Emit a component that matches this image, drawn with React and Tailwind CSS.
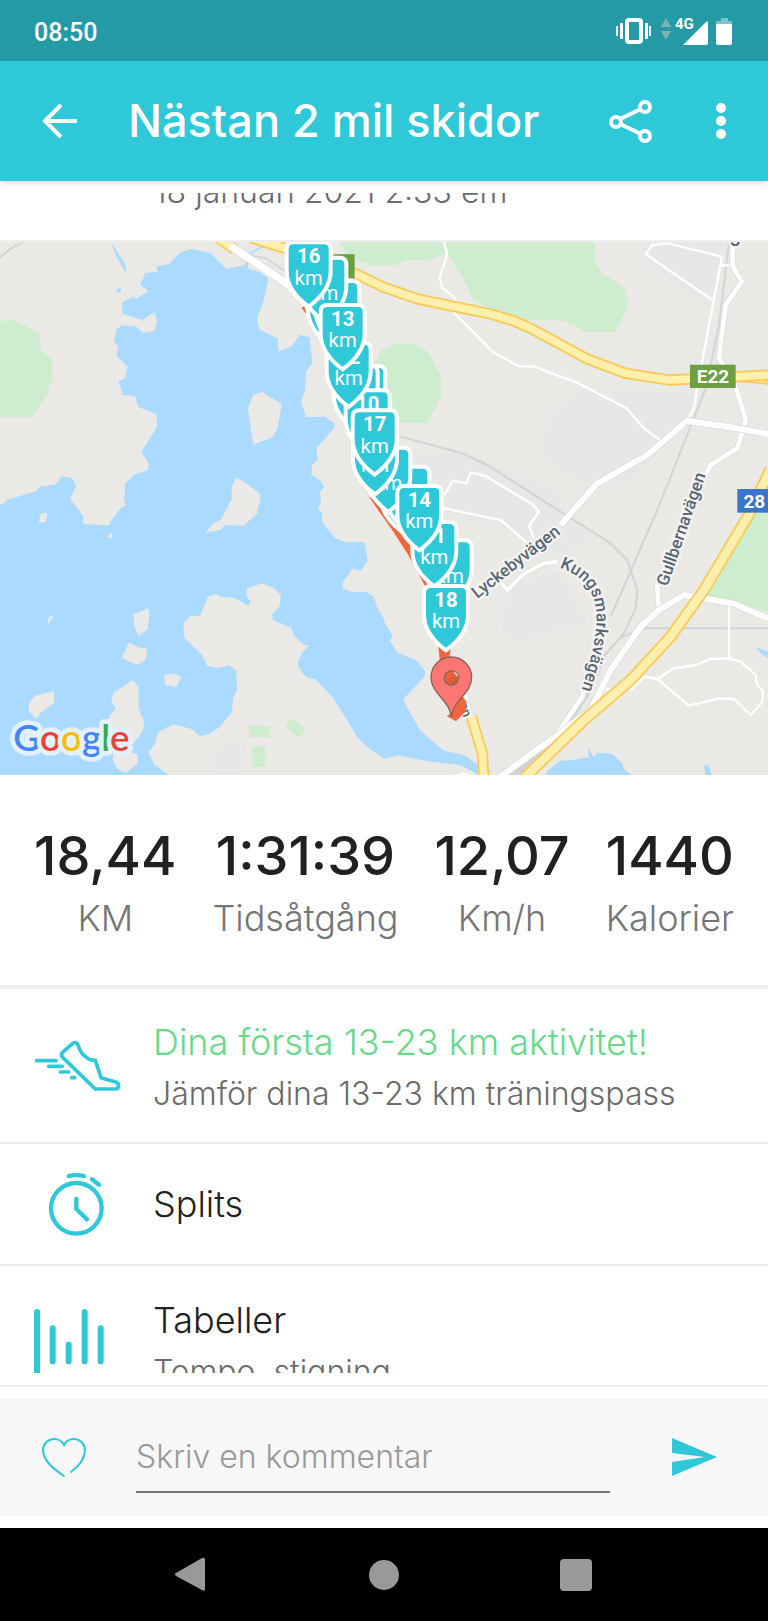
const STATS = [
  { value: "18,44", label: "KM" },
  { value: "1:31:39", label: "Tidsåtgång" },
  { value: "12,07", label: "Km/h" },
  { value: "1440", label: "Kalorier" },
];

// km flags along the track, back to front
const FLAGS = [
  { x: 990, y: 119 },
  { x: 1012, y: 119 },
  { x: 973, y: 49, km: "4" },
  { x: 926, y: 3, km: "16" },
  { x: 1090, y: 374 },
  { x: 1067, y: 374 },
  { x: 1103, y: 447, km: "10" },
  { x: 1046, y: 304, km: "12" },
  { x: 1028, y: 191, km: "13" },
  { x: 1208, y: 680 },
  { x: 1222, y: 676 },
  { x: 1165, y: 619, km: "3" },
  { x: 1125, y: 566, km: "9" },
  { x: 1124, y: 507, km: "17" },
  { x: 1349, y: 897, km: "2" },
  { x: 1303, y: 842, km: "11" },
  { x: 1258, y: 734, km: "14" },
  { x: 1338, y: 1034, km: "18" },
];

function Flag({ x, y, km }) {
  return (
    <g transform={`translate(${x} ${y})`} textAnchor="middle" fill="#fff" fontSize="61">
      <path
        d="M-66 18Q-66 -2 -46 -2H46Q66 -2 66 18V84Q66 142 0 191Q-66 142 -66 84Z"
        fill="#2ec8d8"
        stroke="#fff"
        strokeWidth="12"
      />
      {km && <text y="61" fontWeight="700">{km}</text>}
      {km && <text y="125">km</text>}
    </g>
  );
}

function Road({ d, width = 18, fill = "#fff", edge = "#d9d9da" }) {
  return (
    <g fill="none" strokeLinejoin="round">
      <path d={d} stroke={edge} strokeWidth={width + 4} />
      <path d={d} stroke={fill} strokeWidth={width} />
    </g>
  );
}

function Highway({ d, width = 34 }) {
  return (
    <g fill="none" strokeLinejoin="round">
      <path d={d} stroke="#f7cb5a" strokeWidth={width} />
      <path d={d} stroke="#ffefad" strokeWidth={width - 11} />
    </g>
  );
}

function TrackMap() {
  return (
    <svg
      viewBox="0 0 2304 1599"
      className="block w-full bg-[#ebe9e6] font-['Roboto',sans-serif] font-normal"
      role="img"
      aria-label="Karta över passet"
    >
      {/* north-west: bay and woods */}
      <g transform="translate(0 -21)">
        <path fill="#ceedce" d="M0 258 38 255 118 293 123 345 157 373V430L143 475 97 545H0Z" />
        <g fill="#aadaff">
          <path d="M378 814 372 798 376 745 407 716 442 707 447 688 424 650 471 577 470 537 415 516 405 483 368 480 355 438 373 431 383 396 350 362 355 337 342 319 349 286 365 271 410 275 428 293 463 289 471 262 464 231 428 255 367 236V202L405 182 404 193 445 169 420 149 436 114 474 110 468 95 508 86 537 55 575 41 632 55 680 102 735 90 742 74 745 103 778 110 805 128 793 190 770 255 780 285 833 310 835 350 876 333 898 300 928 306 937 384 918 410 915 465 903 500 918 546 975 545 1003 565 1004 577 950 640 953 675 936 690 934 720 963 738 972 757 960 770 965 814Z" />
          <path d="M0 808 22 794 110 768 122 754 165 749 187 724 217 730 229 752 211 790 225 814H0Z" />
          <path d="M332 22 375 85 380 117 348 62Z" />
          <path d="M345 170 362 155V174Z" />
        </g>
        <path d="M740 95 748 56 803 28" fill="none" stroke="#aadaff" strokeWidth="5" />
        <g fill="#ebe9e6">
          <path d="M760 480 786 471 845 507 833 580 818 606 760 629 744 522Z" />
          <path d="M708 729 733 740 780 777 779 814H680L695 795V755Z" />
        </g>
        <g fill="none" stroke="#d3d3d6" strokeWidth="5">
          <path d="M0 68 30 42 70 20" />
          <path d="M750 60 800 70 870 120" />
        </g>
        <Highway d="M650 5 705 44" />
        <Road d="M690 32 860 146 920 210" width={22} />
      </g>

      {/* south-west: open water with islands */}
      <g transform="translate(0 774)">
        <path fill="#aadaff" d="M0 14H1152V828H0Z" />
        <g fill="#ebe9e6">
          <path d="M215 0 250 50V72L325 76 360 26 379 14 370 0Z" />
          <path d="M695 0H778L772 40 730 78 676 75 662 90 617 98 640 70 662 60Z" />
          <path d="M965 0 954 25 966 38 968 68 1005 115 1035 126H1094L1103 182 1082 213 1059 205 1029 245V266L1055 275H1098L1121 290 1130 318 1154 364V0Z" />
          <path d="M550 370 571 347 600 348 623 292 648 281 660 290 707 295 745 318 753 303 740 292V266L785 250 820 263 843 285 838 320 817 343 818 360 874 384 882 408 912 434 926 436 906 460 893 492 904 516 922 533 947 538 1001 596 1070 708 1105 744 1154 777V828H512L464 795 446 758 465 730 475 697 520 673 578 688 599 708 628 702 658 682 696 635 699 595 711 570 709 513 688 496 652 504 622 498 604 462 553 414Z" />
          <path d="M122 41 141 38 139 65 117 68Z" />
          <path d="M0 0H20L15 8 0 16Z" />
          <path d="M319 111 336 98V116Z" />
          <path d="M146 351 161 348 144 374Z" />
          <path d="M400 343 444 325 449 345 442 390 415 407 402 372Z" />
          <path d="M387 428 418 443H442L437 478 411 495 365 473Z" />
          <path d="M492 526 525 521 544 530 529 561 496 556Z" />
          <path d="M104 588 163 573 162 610 121 638 110 657 86 635 88 608Z" />
          <path d="M340 580 400 539 415 563 416 625 432 663 429 693 397 735 403 742 395 755 413 765V790L379 818 351 806 339 780 340 690 328 660 329 645 349 628 334 605Z" />
        </g>
        <path fill="#e7e7e8" d="M640 760 680 735 735 730V770L710 828H650L635 790Z" />
        <g fill="#ceedce">
          <path d="M748 675 809 679 808 714 746 710Z" />
          <path d="M758 737 798 739 797 801 756 800Z" />
          <path d="M877 653 918 690 895 715 855 678Z" />
        </g>
      </g>

      {/* land cover in the east */}
      <g transform="translate(1152 -21)">
        <path fill="#ceedce" d="M-137 22-100 70-37 92H28L70 76 135 74 188 55 235 125 270 198 325 222 400 250 430 256H530L575 270 593 290H694L733 212 725 165 697 140 653 115 633 80V22Z" />
        <path fill="#ceedce" d="M-27 385-8 345 28 327H95L132 350 172 426V485L130 563H50Z" />
        <g fill="#e7e7e8">
          <path d="M785 22H1020L985 220 770 85Z" />
          <path d="M580 465 930 480 905 560 740 745 600 740 500 695 465 620 510 530Z" />
          <path d="M90 670 250 650 350 700 545 780 540 850 640 905 540 955 440 935 380 885 180 830Z" />
          <path d="M370 1045 530 1005 610 1165 400 1215 355 1195Z" />
        </g>
      </g>
      <g transform="translate(1152 774)">
        <g fill="#aadaff">
          <path d="M-1 362 26 408 18 422 40 458 95 480 123 512 122 530 57 598 107 690 180 752 240 765 285 796 310 800V828H290L230 795 140 785 40 766-1 777Z" />
          <path d="M485 828 488 815 530 782 565 780 615 772 612 743 630 772 640 758 685 762 715 790 718 805 745 828Z" />
          <path d="M960 795 973 796 985 828H965Z" />
          <path d="M1114 441 1140 450 1152 455V475L1135 465Z" />
        </g>
        <path fill="#ceedce" d="M1152 20H1105L958 290 1050 305 1152 335Z" />
      </g>

      {/* railways and small streets */}
      <g transform="translate(1152 -21)" fill="none" strokeLinejoin="round">
        <g stroke="#d3d3d6" strokeWidth="6">
          <path d="M1035 22 1005 270 965 460 820 825 680 1145" />
          <path d="M50 605 235 655 310 690 490 805 680 925 730 975 760 1065 755 1120 720 1195 650 1275" />
          <path d="M710 1208 780 1180H1152" />
          <path d="M660 1260 625 1345" strokeWidth="14" />
          <path d="M625 1345 520 1505 380 1625" strokeWidth="24" />
        </g>
        <g stroke="#fff" strokeWidth="7">
          <path d="M180 22 190 58 167 128 175 158 213 190 210 232 325 350 403 393 450 395 580 443 728 520 780 580 830 616" />
          <path d="M1014 65 852 25 805 30 785 57 985 195" />
          <path d="M1014 65 940 455 930 520 910 555M1012 90 1045 92" />
          <path d="M180 780 207 737 248 745 260 712 305 723 445 808 465 830 435 873 450 910" />
          <path d="M170 818 350 855 380 880 430 925" />
          <path d="M1035 1110V1270" />
          <path d="M740 1365 780 1325 820 1332 870 1300 935 1290 980 1272 1035 1270 1070 1280 1115 1320 1118 1345 1137 1370 1135 1400 1100 1440 1050 1392 1005 1390 915 1412 820 1332M665 1360 700 1370" />
        </g>
      </g>

      {/* main roads */}
      <g transform="translate(1152 -21)">
        <Road d="M1047 30 1045 90 1073 140 1025 210 1005 370 1050 440 1085 555 1075 590 1060 640 980 690 950 750 820 1055 825 1125" width={14} />
        <Road d="M910 557 790 660 640 745 530 870" />
        <Road d="M905 557 1060 580 1152 597" />
        <Road d="M520 980 480 985 415 1020 370 1065 345 1035" width={12} />
        <Road d="M605 1320 595 1385 510 1510" width={14} />
        <Road d="M345 1628 500 1515 620 1425 680 1305 770 1175 825 1125 900 1080 1045 1105 1152 1150" />
        <Road d="M240 1380 258 1450" width={20} />
        <Highway d="M1060 434 1152 442" width={14} />
        <Highway d="M-400 8-290 42-87 115 0 157 105 193 320 237 390 258 440 280 610 372 725 415 855 435 920 432 1060 425 1152 420" />
        <Highway d="M1160 702 1095 838 960 1065 860 1205 740 1335 600 1455 420 1630" width={36} />
        <Highway d="M262 1445 295 1555 300 1630" />
        <path d="M190 1625 240 1612 280 1625" fill="#fff" />
      </g>

      {/* names */}
      <g transform="translate(1152 -21)" fill="#5a6571" fontSize="51" fontWeight="500" stroke="#f3f3f2" strokeWidth="14" strokeLinejoin="round" paintOrder="stroke">
        <path id="kungs" d="M526 998C660 1045 665 1150 584 1390" fill="none" stroke="none" />
        <text><textPath href="#kungs">Kungsmarksvägen</textPath></text>
        <text transform="translate(280 1092) rotate(-38)">Lyckebyvägen</text>
        <text transform="translate(850 1056) rotate(-71)">Gullbernavägen</text>
        <text x="1038" y="32" fontSize="60">s</text>
        <text transform="translate(224 1408) rotate(70)" fontSize="40">en</text>
      </g>
      <g fill="#fff" fontSize="57" fontWeight="700" textAnchor="middle">
        <path fill="#6a9f42" d="M2070 368H2207V438H2070ZM1000 37H1064V109H1000Z" />
        <text x="2139" y="424">E22</text>
        <path fill="#3b76c9" d="M2212 741H2304V812H2212Z" />
        <text x="2263" y="797">28</text>
      </g>

      {/* track */}
      <g transform="translate(960 654)" fill="#f0663f">
        <path d="M145 108 275 205 290 300 325 380 315 378 265 285 215 208Z" />
        <path d="M354 550H395L385 610H360Z" />
        <path d="M-55-455-48-462-38-435Z" />
        <path d="M380 768 395 760 425 705 440 725 436 755 408 784Z" />
      </g>

      {FLAGS.map((f, i) => (
        <Flag key={i} {...f} />
      ))}

      {/* finish pin */}
      <g transform="translate(1354 1308)">
        <path d="M0 116C-6 66-61 46-61 -2A61 61 0 0 1 61 -2C61 46 6 66 0 116Z" fill="#ff7674" stroke="#8a6350" strokeWidth="4" />
        <circle r="21" fill="#f0613a" stroke="#8c6a52" strokeWidth="5" />
        <path d="M8 -17A19 19 0 0 1 18 -5" fill="none" stroke="#e8d9c6" strokeWidth="4" />
        <circle cx="4" cy="6" r="8" fill="none" stroke="#c9502f" strokeWidth="3" />
      </g>

      <text
        x="40"
        y="1528"
        fontSize="110"
        fontWeight="600"
        stroke="#e3f1fb"
        strokeWidth="28"
        strokeLinejoin="round"
        paintOrder="stroke"
        className="font-['Lato',sans-serif]"
      >
        <tspan fill="#4285f4">G</tspan>
        <tspan fill="#ea4335">o</tspan>
        <tspan fill="#fbbc05">o</tspan>
        <tspan fill="#4285f4">g</tspan>
        <tspan fill="#34a853">l</tspan>
        <tspan fill="#ea4335">e</tspan>
      </text>
    </svg>
  );
}

function StatusBar() {
  return (
    <div className="flex h-[61px] items-center justify-between bg-[#239aa6] px-[34px] font-['Roboto',sans-serif] text-white">
      <span className="pt-1 text-[25px] leading-8 font-medium">08:50</span>
      <svg viewBox="0 0 118 32" className="h-8 w-[118px]" fill="#fff" aria-hidden="true">
        <rect x="11" y="5" width="14" height="22" rx="2" fill="none" stroke="#fff" strokeWidth="4" />
        <path d="M4 8h3v16H4zM0 11h2v10H0zM29 8h3v16h-3zM33 11h2v10h-2z" />
        <path d="M45 12l5-9 5 9zM45 16h10l-5 9z" fill="#7bb3b5" />
        <text x="59" y="14" fontSize="15" fontWeight="700">4G</text>
        <path d="M67 30 90 7q2-2 2 1v20q0 2-2 2z" />
        <path d="M105 3h7v3h4v4h-16V6h5z" fill="#7cc3c9" />
        <path d="M100 9h16v19q0 2-2 2h-12q-2 0-2-2z" />
      </svg>
    </div>
  );
}

function Header() {
  return (
    <header className="relative flex h-[120px] items-center bg-[#2ec8d8] pr-[29px] pl-[42px] text-white shadow-md">
      <button aria-label="Tillbaka" className="w-[86px]">
        <svg viewBox="0 0 36 36" className="size-9" fill="none" stroke="currentColor" strokeWidth="4">
          <path d="M35 18H4M19 2 3 18l16 16" />
        </svg>
      </button>
      <h1 className="flex-1 text-[45px] leading-[56px] font-medium whitespace-nowrap">Nästan 2 mil skidor</h1>
      <button aria-label="Dela" className="mr-[50px]">
        <svg viewBox="0 0 44 44" className="size-11" fill="none" stroke="currentColor" strokeWidth="4">
          <circle cx="7" cy="23" r="5" />
          <circle cx="36" cy="8" r="5" />
          <circle cx="36" cy="37" r="5" />
          <path d="M11 20 32 10M11 25l21 10" />
        </svg>
      </button>
      <button aria-label="Fler alternativ">
        <svg viewBox="0 0 36 36" className="size-9" fill="currentColor">
          <circle cx="18" cy="5" r="5" />
          <circle cx="18" cy="18" r="5" />
          <circle cx="18" cy="31" r="5" />
        </svg>
      </button>
    </header>
  );
}

function ShoeIcon() {
  return (
    <svg viewBox="99 118 261 159" className="h-[53px] w-[87px]" fill="none" stroke="#2ec8d8" strokeWidth="11" strokeLinecap="round" strokeLinejoin="round" aria-hidden="true">
      <path d="M184 159 214 132Q224 124 230 134 238 160 252 170 265 182 283 182L300 234 344 247Q353 251 353 259 352 268 342 268H283L185 173Q178 166 184 159Z" />
      <path d="M107 183H165M143 200H184M178 217H203M212 234H221" />
    </svg>
  );
}

function StopwatchIcon() {
  return (
    <svg viewBox="144 516 171 195" className="h-[65px] w-[57px]" fill="none" stroke="#2ec8d8" strokeWidth="13" strokeLinecap="round" strokeLinejoin="round" aria-hidden="true">
      <circle cx="229" cy="625" r="76" />
      <path d="M229 597V627L261 658M206 528Q229 523 252 528M276 538 297 554" />
    </svg>
  );
}

function BarsIcon() {
  return (
    <svg viewBox="102 926 210 192" className="h-16 w-[70px]" fill="none" stroke="#2ec8d8" strokeWidth="18" strokeLinecap="round" aria-hidden="true">
      <path d="M111 935V1140M158 984V1083M206 1033V1083M254 935V1083M302 984V1083" />
    </svg>
  );
}

export default function App() {
  return (
    <div className="flex min-h-screen flex-col overflow-x-hidden bg-white font-['Inter',sans-serif] font-light">
      <StatusBar />
      <Header />

      <main className="flex-1">
        <div className="border-b-2 border-[#eeeeee] pt-3 pb-7 pl-[154px]">
          <p className="flex h-[19px] items-end overflow-hidden text-[32px] leading-[40px] text-[#6b6b6b]">18 januari 2021 2:33 em</p>
        </div>

        <TrackMap />

        <dl className="flex justify-between border-b-4 border-[#ededed] px-[34px] pt-[52px] pb-[34px] text-center">
          {STATS.map((s) => (
            <div key={s.label} className="flex flex-col-reverse">
              <dt className="text-[36px] leading-[66px] text-[#757575]">{s.label}</dt>
              <dd className="text-[54px] leading-[58px] font-medium text-[#212121]">{s.value}</dd>
            </div>
          ))}
        </dl>

        <a href="#jamfor" className="flex h-[155px] items-center border-b-2 border-[#ededed] pl-[34px]">
          <span className="w-[119px]"><ShoeIcon /></span>
          <span className="pt-1">
            <span className="block text-[36px] leading-[52px] text-[#68d98b]">Dina första 13-23 km aktivitet!</span>
            <span className="block text-[32px] leading-[52px] text-[#6b6b6b]">Jämför dina 13-23 km träningspass</span>
          </span>
        </a>
        <a href="#splits" className="flex h-[122px] items-center border-b-2 border-[#ededed] pl-12">
          <span className="w-[105px]"><StopwatchIcon /></span>
          <span className="text-[36px] leading-[52px] text-[#212121]">Splits</span>
        </a>
        <a href="#tabeller" className="block border-b-2 border-[#ededed] pb-3 pl-[34px]">
          <span className="flex h-[107px] overflow-hidden pt-7">
            <span className="w-[119px] pt-[15px]"><BarsIcon /></span>
            <span>
              <span className="block text-[36px] leading-[52px] text-[#212121]">Tabeller</span>
              <span className="block text-[32px] leading-[52px] text-[#6b6b6b]">Tempo, stigning</span>
            </span>
          </span>
        </a>
      </main>

      <form className="my-3 flex h-[117px] items-center bg-[#f7f7f7] pr-[50px] pl-[42px]">
        <button type="button" aria-label="Gilla" className="w-[94px]">
          <svg viewBox="0 0 44 40" className="h-10 w-11" fill="none" stroke="#2ec8d8" strokeWidth="2" strokeLinecap="round">
            <path d="M22 38C10 30 1 22 1 12 1 6 6 1 12 1 16 1 20 3 22 7 24 3 28 1 32 1 38 1 43 6 43 12 43 20 37 28 29 34" />
          </svg>
        </button>
        <input
          type="text"
          aria-label="Skriv en kommentar"
          placeholder="Skriv en kommentar"
          className="mt-3 h-[58px] min-w-0 flex-1 border-b-2 border-[#757575] bg-transparent pb-3 text-[32px] placeholder:text-[#999999]"
        />
        <button type="submit" aria-label="Skicka" className="ml-[62px]">
          <svg viewBox="0 0 46 40" className="h-10 w-[46px]" fill="#2ec8d8">
            <path d="M0 0 45 19 0 38V24L33 19 0 15Z" />
          </svg>
        </button>
      </form>

      <nav className="grid h-[94px] grid-cols-3 place-items-center bg-black px-[12.5%]">
        <button aria-label="Bakåt">
          <svg viewBox="0 0 36 36" className="size-9" fill="#999">
            <path d="M31 3V32Q31 35 28 33L2 19Q0 17 2 16L28 1Q31 0 31 3Z" />
          </svg>
        </button>
        <button aria-label="Hem" className="size-[30px] rounded-full bg-[#999]" />
        <button aria-label="Översikt" className="size-8 rounded-sm bg-[#999]" />
      </nav>
    </div>
  );
}
